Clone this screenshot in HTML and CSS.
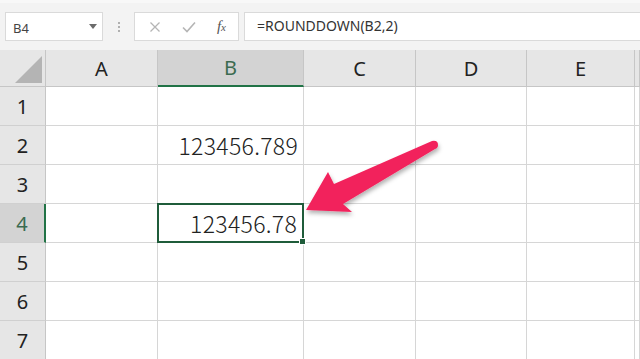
FILE: index.html
```html
<!DOCTYPE html>
<html lang="ja">
<head>
  <meta charset="UTF-8">
  <meta name="viewport" content="width=device-width, initial-scale=1.0">
  <title>ROUNDDOWN</title>
  <link rel="stylesheet" href="styles.css">
</head>
<body>
  <div class="toolbar">
    <div class="name-box">
      <span>B4</span>
      <svg class="caret" width="8" height="5" viewBox="0 0 8 5"><path d="M0 0h8L4 5z" fill="#6b6b6b"/></svg>
    </div>
    <div class="dots"><i></i><i></i><i></i></div>
    <div class="fx-box">
      <svg width="12" height="12" viewBox="0 0 12 12"><path d="M1.5 1.5l9 9M10.5 1.5l-9 9" stroke="#b5b5b5" stroke-width="1.3" fill="none"/></svg>
      <svg width="14" height="12" viewBox="0 0 14 12"><path d="M1 6.5l4 4L13 1.5" stroke="#b5b5b5" stroke-width="1.6" fill="none"/></svg>
      <span class="fx"><i>f</i><small>x</small></span>
    </div>
    <div class="formula">=ROUNDDOWN(B2,2)</div>
  </div>

  <div class="sheet">
    <div class="corner"><span class="tri"></span></div>
    <div class="col-head">A</div>
    <div class="col-head active">B</div>
    <div class="col-head">C</div>
    <div class="col-head">D</div>
    <div class="col-head">E</div>
    <div class="col-head"></div>

    <div class="row-head">1</div><div class="cell"></div><div class="cell"></div><div class="cell"></div><div class="cell"></div><div class="cell"></div><div class="cell"></div>
    <div class="row-head">2</div><div class="cell"></div><div class="cell num">123456.789</div><div class="cell"></div><div class="cell"></div><div class="cell"></div><div class="cell"></div>
    <div class="row-head">3</div><div class="cell"></div><div class="cell"></div><div class="cell"></div><div class="cell"></div><div class="cell"></div><div class="cell"></div>
    <div class="row-head active">4</div><div class="cell"></div><div class="cell num selected">123456.78<span class="handle"></span></div><div class="cell"></div><div class="cell"></div><div class="cell"></div><div class="cell"></div>
    <div class="row-head">5</div><div class="cell"></div><div class="cell"></div><div class="cell"></div><div class="cell"></div><div class="cell"></div><div class="cell"></div>
    <div class="row-head">6</div><div class="cell"></div><div class="cell"></div><div class="cell"></div><div class="cell"></div><div class="cell"></div><div class="cell"></div>
    <div class="row-head">7</div><div class="cell"></div><div class="cell"></div><div class="cell"></div><div class="cell"></div><div class="cell"></div><div class="cell"></div>
  </div>

  <svg class="arrow" width="640" height="359" viewBox="0 0 640 359">
    <defs>
      <filter id="shadow" x="-10%" y="-10%" width="130%" height="140%">
        <feDropShadow dx="1" dy="3" stdDeviation="2" flood-color="#000" flood-opacity="0.3"/>
      </filter>
    </defs>
    <path d="M306 210 L328 172 L334 184 L432 141 Q438 140 438 145 Q438 148 435 149 L343 204 L352 212 Z" fill="#f2225c" filter="url(#shadow)"/>
  </svg>
</body>
</html>
```

FILE: styles.css
```css
body {
  margin: 0;
  width: 640px;
  height: 359px;
  overflow: hidden;
  background: #fff;
  font-family: "Noto Sans", "Noto Sans CJK JP", sans-serif;
  position: relative;
}

/* formula bar */
.toolbar {
  height: 50px;
  box-sizing: border-box;
  background: #f3f3f3;
  border-top: 3px solid #f8f8f8;
  padding: 9px 0 9px 5px;
  display: flex;
  align-items: stretch;
}
.name-box {
  width: 98px;
  box-sizing: border-box;
  background: #fff;
  border: 1px solid #dadada;
  display: flex;
  align-items: center;
  justify-content: space-between;
  padding: 2px 5px 0 7px;
  font-size: 13px;
  color: #444;
}
.caret {
  margin-top: -3px;
}
.dots {
  width: 31px;
  display: flex;
  flex-direction: column;
  align-items: center;
  justify-content: center;
  gap: 2px;
}
.dots i {
  width: 2px;
  height: 2px;
  background: #b0b0b0;
}
.fx-box {
  width: 105px;
  box-sizing: border-box;
  background: #fff;
  border: 1px solid #dadada;
  display: flex;
  align-items: center;
  justify-content: space-between;
  padding: 0 12px 0 14px;
}
.fx {
  font-family: "Liberation Serif", serif;
  font-size: 15px;
  color: #555;
}
.fx small {
  font-size: 11px;
  font-style: italic;
}
.formula {
  flex: 1;
  margin-left: 5px;
  background: #fff;
  border: 1px solid #dadada;
  border-right: none;
  display: flex;
  align-items: center;
  padding: 0 0 2px 12px;
  font-size: 14px;
  color: #333;
}

/* sheet grid */
.sheet {
  display: grid;
  grid-template-columns: 46px 112px 146px 112px 111px 108px 5px;
  grid-template-rows: 37px repeat(7, 39px);
}
.corner {
  background: #e6e6e6;
  border-right: 1px solid #c6c6c6;
  border-bottom: 1px solid #c6c6c6;
  position: relative;
}
.tri {
  position: absolute;
  right: 3px;
  bottom: 3px;
  width: 0;
  height: 0;
  border-left: 27px solid transparent;
  border-bottom: 27px solid #b4b4b4;
}
.col-head {
  background: #e6e6e6;
  border-right: 1px solid #c6c6c6;
  border-bottom: 1px solid #c6c6c6;
  display: flex;
  align-items: center;
  justify-content: center;
  font-size: 20px;
  color: #222;
}
.col-head.active {
  background: #d3d3d3;
  color: #3b6b50;
  border-bottom: 2px solid #217346;
}
.row-head {
  background: #e6e6e6;
  border-right: 1px solid #c6c6c6;
  border-bottom: 1px solid #d0d0d0;
  display: flex;
  align-items: center;
  justify-content: center;
  font-size: 20px;
  color: #222;
}
.row-head.active {
  background: #d3d3d3;
  color: #3b6b50;
  border-right: 2px solid #217346;
}
.cell {
  border-right: 1px solid #d6d6d6;
  border-bottom: 1px solid #d6d6d6;
}
.num {
  display: flex;
  align-items: center;
  justify-content: flex-end;
  padding-right: 5px;
  font-family: "Noto Sans CJK JP", sans-serif;
  font-size: 23px;
  font-weight: 300;
  letter-spacing: 0.3px;
  color: #222;
}
.selected {
  position: relative;
  border: 2px solid #1f5c3a;
  margin: -1px 0 0 -1px;
}
.handle {
  position: absolute;
  right: -4px;
  bottom: -4px;
  width: 5px;
  height: 5px;
  background: #1f5c3a;
  border: 1px solid #fff;
}

.arrow {
  position: absolute;
  left: 0;
  top: 0;
  pointer-events: none;
}
```
